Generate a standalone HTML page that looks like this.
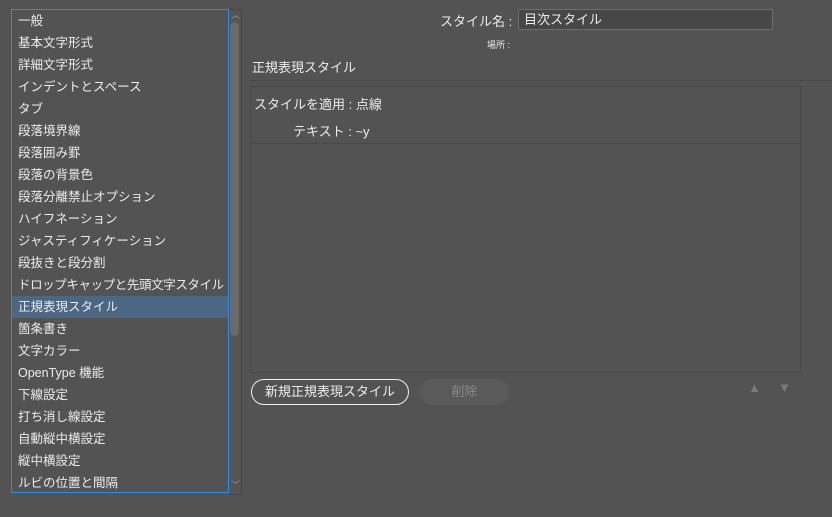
<html><head><style>
body{margin:0;width:832px;height:517px;background:#535353;font-family:"Liberation Sans","Noto Sans CJK JP",sans-serif;color:#ececec;font-size:12.5px;position:relative;overflow:hidden}
.a{position:absolute}
#list{left:11px;top:9px;width:216px;height:482px;border:1px solid #2d8ceb;box-sizing:content-box;overflow:hidden}
.it{height:22px;line-height:22px;padding-left:6px;white-space:nowrap}
.sel{background:#4b6783}
</style></head><body>
<div class="a" style="left:229px;top:9px;width:12px;height:484px;border:1px solid #474747;border-left:none;background:#555"></div>
<div class="a" style="left:230px;top:22px;width:9px;height:314px;background:#6a6a6a;border-radius:5px"></div>
<div class="a" style="left:231px;top:8px;font-size:9px;color:#999">︿</div>
<div class="a" style="left:231px;top:478px;font-size:9px;color:#999">﹀</div>
<div id="list" class="a">
<div class="it">一般</div><div class="it">基本文字形式</div><div class="it">詳細文字形式</div><div class="it">インデントとスペース</div><div class="it">タブ</div><div class="it">段落境界線</div><div class="it">段落囲み罫</div><div class="it">段落の背景色</div><div class="it">段落分離禁止オプション</div><div class="it">ハイフネーション</div><div class="it">ジャスティフィケーション</div><div class="it">段抜きと段分割</div><div class="it" style="letter-spacing:-0.4px">ドロップキャップと先頭文字スタイル</div><div class="it sel">正規表現スタイル</div><div class="it">箇条書き</div><div class="it">文字カラー</div><div class="it">OpenType 機能</div><div class="it">下線設定</div><div class="it">打ち消し線設定</div><div class="it">自動縦中横設定</div><div class="it">縦中横設定</div><div class="it">ルビの位置と間隔</div>
</div>
<div class="a" style="left:440px;top:11px;font-size:13px">スタイル名 :</div>
<div class="a" style="left:518px;top:9px;width:255px;height:21px;border:1px solid #6e6e6e;border-radius:2px;background:#474747;box-sizing:border-box;padding-left:5px;line-height:19px;font-size:13px">目次スタイル</div>
<div class="a" style="left:487px;top:38px;font-size:9px">場所 :</div>
<div class="a" style="left:252px;top:57px;font-size:13px">正規表現スタイル</div>
<div class="a" style="left:249px;top:80px;width:583px;height:1px;background:#484848"></div>
<div class="a" style="left:250px;top:86px;width:551px;height:287px;border:1px solid #484848;box-sizing:border-box"></div>
<div class="a" style="left:251px;top:143px;width:549px;height:1px;background:#484848"></div>
<div class="a" style="left:254px;top:94px;font-size:13px">スタイルを適用 : 点線</div>
<div class="a" style="left:293px;top:121px;font-size:13px">テキスト : ~y</div>
<div class="a" style="left:251px;top:379px;width:158px;height:26px;border:1px solid #eee;border-radius:13px;box-sizing:border-box;text-align:center;line-height:24px;font-size:13px">新規正規表現スタイル</div>
<div class="a" style="left:420px;top:379px;width:89px;height:26px;border-radius:13px;background:#5a5a5a;text-align:center;line-height:26px;font-size:13px;color:#8a8a8a">削除</div>
<div class="a" style="left:748px;top:380px;font-size:13px;color:#7a7a7a">▲</div>
<div class="a" style="left:778px;top:380px;font-size:13px;color:#7a7a7a">▼</div>
</body></html>
